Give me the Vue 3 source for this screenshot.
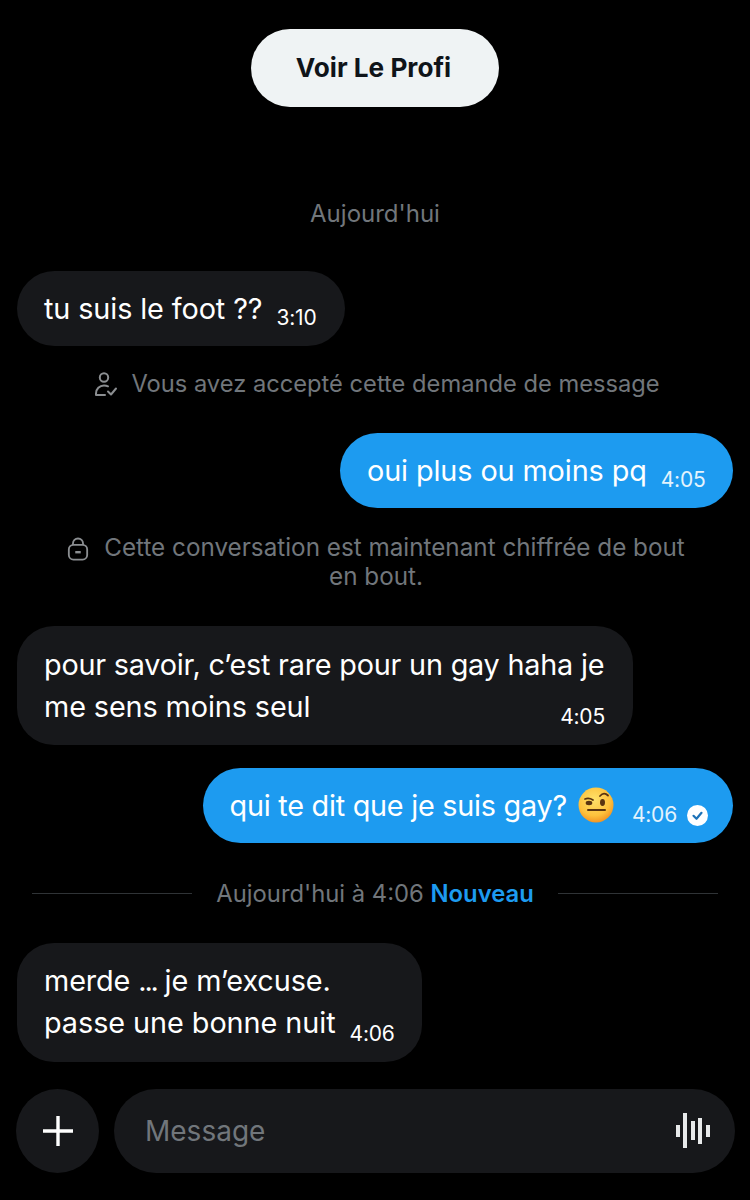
<script setup>
const bars = [
  { x: 1, h: 12 },
  { x: 8, h: 35 },
  { x: 16, h: 19 },
  { x: 23, h: 26 },
  { x: 31, h: 12 },
]
</script>

<template>
  <div class="screen">
    <div class="top"><button class="profile">Voir Le Profi</button></div>

    <div class="day">Aujourd'hui</div>

    <div class="row left r1">
      <div class="bubble in single pad1">
        <span class="msg">tu suis le foot ??</span><span class="time">3:10</span>
      </div>
    </div>

    <div class="notice n1">
      <svg class="ico" width="26" height="26" viewBox="0 0 26 26" fill="none" stroke="#8b8e91" stroke-width="2">
        <circle cx="11" cy="6.500" r="4.200" />
        <path d="M3 24v-1.500c0-4.500 3.500-8 8-8 1.500 0 3 .3 4 .8M3 24h9" stroke-linecap="round" />
        <path d="M15 20.500l3 3 5-6" stroke-linecap="round" stroke-linejoin="round" />
      </svg>
      <span>Vous avez accepté cette demande de message</span>
    </div>

    <div class="row right r2">
      <div class="bubble out single w2">
        <span class="msg">oui plus ou moins pq</span><span class="time">4:05</span>
      </div>
    </div>

    <div class="lock">
      <svg class="lockico" width="24" height="26" viewBox="0 0 24 26" fill="none" stroke="#8b8e91" stroke-width="2">
        <rect x="2" y="8.500" width="20" height="16" rx="5" />
        <path d="M6.500 8.500V7a5.500 5.500 0 0 1 11 0v1.500" />
        <path d="M9 16.500h6" stroke-width="2.600" />
      </svg>Cette conversation est maintenant chiffrée de bout<br />en bout.
    </div>

    <div class="row left r3">
      <div class="bubble in multi w3">
        <div class="lines"><span class="tight">pour savoir, c’est rare pour un gay haha je</span><br />me sens moins seul</div>
        <span class="time corner">4:05</span>
      </div>
    </div>

    <div class="row right r4">
      <div class="bubble out single pad4">
        <span class="msg tighter">qui te dit que je suis gay?</span>
        <svg class="emoji" width="36" height="36" viewBox="0 0 36 36">
          <defs>
            <radialGradient id="face" cx="45%" cy="35%" r="70%">
              <stop offset="0" stop-color="#ffe26a" />
              <stop offset="0.65" stop-color="#fdc13c" />
              <stop offset="1" stop-color="#f08a1e" />
            </radialGradient>
          </defs>
          <circle cx="18" cy="18" r="17.500" fill="url(#face)" />
          <path d="M7 12q4-1.500 8 1" fill="none" stroke="#5a3410" stroke-width="1.800" stroke-linecap="round" />
          <path d="M22 9q4-4.500 8-.5" fill="none" stroke="#5a3410" stroke-width="1.800" stroke-linecap="round" />
          <ellipse cx="11" cy="16" rx="3.300" ry="2.200" fill="#5a3410" />
          <ellipse cx="24.500" cy="15.500" rx="2.500" ry="3.400" fill="#5a3410" />
          <path d="M10 23h17" stroke="#5a3410" stroke-width="2" stroke-linecap="round" />
        </svg>
        <span class="time t4">4:06</span>
        <svg class="check" width="21" height="21" viewBox="0 0 21 21">
          <circle cx="10.500" cy="10.500" r="10.500" fill="#fff" />
          <path d="M6.500 10.800l3 3 5-6" fill="none" stroke="#1d72b8" stroke-width="2.200" stroke-linecap="round" stroke-linejoin="round" />
        </svg>
      </div>
    </div>

    <div class="divider">
      <span class="rule"></span>
      <span class="divtext">Aujourd'hui à 4:06 <b>Nouveau</b></span>
      <span class="rule"></span>
    </div>

    <div class="row left r5">
      <div class="bubble in multi">
        <div class="lines">merde <span class="dots">...</span> je m’excuse.<br /><span class="wide">passe une bonne nuit</span></div>
        <span class="time inline">4:06</span>
      </div>
    </div>

    <div class="composer">
      <button class="plus" aria-label="Ajouter">
        <svg width="32" height="32" viewBox="0 0 32 32" fill="none" stroke="#fff" stroke-width="3.400">
          <path d="M16 1v30M1 16h30" />
        </svg>
      </button>
      <div class="input">
        <span class="placeholder">Message</span>
        <svg width="36" height="36" viewBox="0 0 36 36" fill="#e7e9ea">
          <rect v-for="b in bars" :key="b.x" :x="b.x" :y="18 - Math.round(b.h / 2)" width="4" :height="b.h" />
        </svg>
      </div>
    </div>
  </div>
</template>

<style scoped>
.screen {
  width: 750px;
  height: 1200px;
  background: #000;
  color: #e7e9ea;
  font-family: Inter, "Liberation Sans", sans-serif;
  overflow: hidden;
  box-sizing: border-box;
  padding-top: 29px;
}
.top {
  display: flex;
  justify-content: center;
}
.profile {
  width: 248px;
  height: 78px;
  border: 0;
  border-radius: 39px;
  background: #eff3f4;
  color: #0f1419;
  font: 700 26.200px Inter, sans-serif;
  padding: 0 3px 2px 0;
}
.day {
  margin-top: 92px;
  height: 30px;
  line-height: 30px;
  text-align: center;
  font-size: 24px;
  color: #71767b;
}
.row {
  display: flex;
}
.left {
  padding-left: 17px;
}
.right {
  justify-content: flex-end;
  padding-right: 17px;
}
.r1 { margin-top: 42px; }
.r2 { margin-top: 35px; }
.r3 { margin-top: 35px; }
.r4 { margin-top: 23px; }
.r5 { margin-top: 35px; }
.bubble {
  box-sizing: border-box;
  color: #fff;
  font-size: 28.800px;
  letter-spacing: -0.100px;
}
.in {
  background: #17181b;
}
.out {
  background: #1d9bf0;
}
.out .time {
  color: #e4f3fd;
}
.single {
  height: 75px;
  border-radius: 37.500px;
  display: flex;
  align-items: center;
  padding: 0 28px 0 27px;
  white-space: nowrap;
}
.pad1 {
  padding-right: 29px;
}
.w2 {
  width: 393px;
  padding-right: 0;
}
.pad4 {
  padding-right: 25px;
}
.multi {
  position: relative;
  border-radius: 37px;
  height: 119px;
  padding: 18px 27px 0 27px;
  display: flex;
  white-space: nowrap;
}
.r5 .multi {
  padding-top: 17px;
}
.w3 { width: 616px; }
.lines {
  line-height: 41.500px;
}
.tight {
  letter-spacing: -0.210px;
}
.tighter {
  letter-spacing: -0.250px;
}
.wide {
  letter-spacing: -0.050px;
}
.dots {
  letter-spacing: -2.200px;
}
.time {
  font-size: 21px;
  letter-spacing: -0.200px;
  margin-left: 14px;
  margin-top: 18px;
}
.corner {
  position: absolute;
  right: 28px;
  bottom: 16px;
}
.inline {
  align-self: flex-end;
  margin: 0 0 16px 14px;
}
.emoji {
  margin-left: 11px;
  margin-top: -2px;
  flex: none;
}
.t4 {
  margin-left: 18px;
}
.check {
  margin-left: 10px;
  margin-top: 20px;
  flex: none;
}
.notice {
  display: flex;
  justify-content: center;
  color: #71767b;
  font-size: 23.700px;
  line-height: 29px;
}
.n1 {
  margin-top: 23px;
  align-items: center;
  gap: 12.500px;
  padding-left: 2.500px;
}
.lock {
  margin-top: 25px;
  padding-left: 2px;
  color: #71767b;
  font-size: 24.250px;
  line-height: 29px;
  text-align: center;
}
.ico {
  flex: none;
}
.lockico {
  display: inline-block;
  vertical-align: -5px;
  width: 22px;
  height: 24px;
  margin-right: 15px;
}
.divider {
  margin-top: 35px;
  padding: 0 32px;
  display: flex;
  align-items: center;
  gap: 24px;
  height: 30px;
}
.rule {
  flex: 1;
  height: 1px;
  background: #2f3336;
}
.divtext {
  font-size: 23.800px;
  color: #71767b;
  white-space: nowrap;
}
.divtext b {
  color: #1d9bf0;
  font-weight: 600;
}
.composer {
  margin-top: 27px;
  padding: 0 15px 0 16px;
  display: flex;
  gap: 15px;
  align-items: center;
}
.plus {
  width: 83px;
  height: 84px;
  flex: none;
  border: 0;
  padding: 0;
  border-radius: 50%;
  background: #17181b;
  display: flex;
  align-items: center;
  justify-content: center;
}
.input {
  flex: 1;
  height: 84px;
  border-radius: 42px;
  background: #17181b;
  display: flex;
  align-items: center;
  justify-content: space-between;
  padding: 0 24px 0 31px;
}
.placeholder {
  font-size: 28px;
  color: #71767b;
}
</style>
